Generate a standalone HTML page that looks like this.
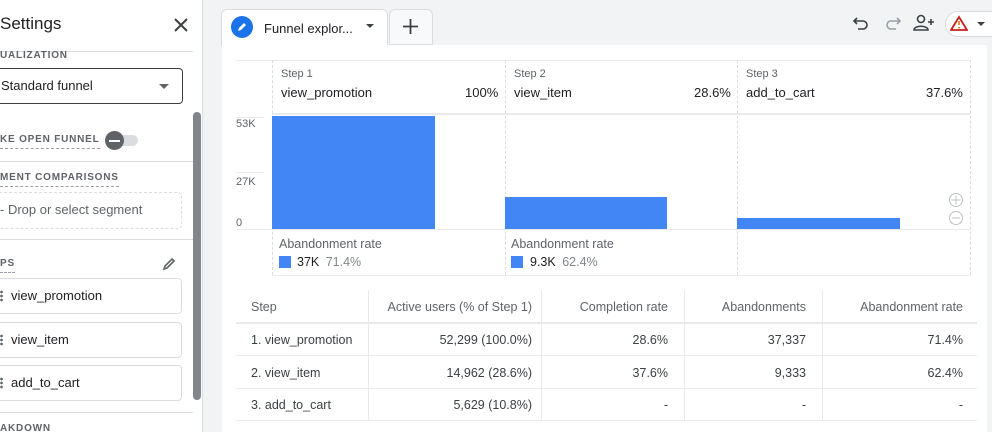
<!DOCTYPE html>
<html><head><style>
*{box-sizing:border-box;margin:0;padding:0}
html,body{width:992px;height:432px;overflow:hidden}
body{background:#f1f3f4;font-family:"Liberation Sans",Arial,sans-serif;color:#202124;position:relative}
.a{position:absolute}
.lab{font-size:10px;letter-spacing:.8px;color:#5f6368;font-weight:bold;border-bottom:1px dashed #9aa0a6}
.stepbox{position:absolute;left:-10px;width:192px;height:36px;border:1px solid #dadce0;border-radius:4px;font-size:13px;line-height:34px;padding-left:20px;background:#fff}
.dots{position:absolute;left:9px;top:11px;width:3px;height:12px;background:radial-gradient(circle,#5f6368 1.2px,transparent 1.5px) 0 0/3px 4px}
.vl{position:absolute;top:60px;height:215px;border-left:1px dashed #dadce0}
.sm{font-size:11px;color:#5f6368}
.t{font-size:13px}
.th{position:absolute;font-size:12.5px;color:#5f6368}
.td{position:absolute;font-size:12.5px;color:#3c4043}
.hl{position:absolute;left:236px;width:741px;border-top:1px solid #e8eaed}
.cl{position:absolute;top:290px;height:130px;border-left:1px solid #e8eaed}
</style></head><body>
<div class="a" style="left:0;top:0;width:203px;height:432px;background:#fff;border-right:1px solid #dadce0"></div>
<div class="a" style="left:0;top:14px;font-size:17px;color:#202124">Settings</div>
<svg class="a" style="left:173px;top:17px" width="16" height="16" viewBox="0 0 16 16"><path d="M2 2L14 14M14 2L2 14" stroke="#3c4043" stroke-width="2"/></svg>
<div class="a" style="left:0;top:51px;width:193px;border-top:1px solid #dadce0"></div>
<div class="a" style="left:0;top:50px;font-size:10px;letter-spacing:.8px;color:#5f6368;font-weight:bold">UALIZATION</div>
<div class="a" style="left:-10px;top:68px;width:193px;height:36px;border:1px solid #3c4043;border-radius:4px;font-size:13px;line-height:34px;padding-left:10px">Standard funnel</div>
<div class="a" style="left:159px;top:84px;border:5px solid transparent;border-top-color:#5f6368"></div>
<div class="a" style="left:193px;top:112px;width:8px;height:288px;background:#80868b;border-radius:4px"></div>
<div class="a lab" style="left:0;top:134px;padding-bottom:3px">KE OPEN FUNNEL</div>
<div class="a" style="left:110px;top:135px;width:28px;height:11px;background:#dadce0;border-radius:6px"></div>
<div class="a" style="left:105px;top:131px;width:19px;height:19px;background:#5f6368;border-radius:50%"></div>
<div class="a" style="left:109px;top:140px;width:11px;height:2px;background:#fff"></div>
<div class="a" style="left:0;top:161px;width:193px;border-top:1px solid #dadce0"></div>
<div class="a lab" style="left:0;top:172px;padding-bottom:3px">MENT COMPARISONS</div>
<div class="a" style="left:-10px;top:192px;width:192px;height:37px;border:1px dashed #dadce0;border-radius:4px"></div>
<div class="a" style="left:0;top:202px;font-size:13px;color:#5f6368">- Drop or select segment</div>
<div class="a" style="left:0;top:239px;width:193px;border-top:1px solid #dadce0"></div>
<div class="a lab" style="left:0;top:258px;padding-bottom:3px">PS</div>
<svg class="a" style="left:162px;top:257px" width="14" height="14" viewBox="0 0 14 14"><path d="M2 12L3 9L10 2L12 4L5 11Z" fill="none" stroke="#5f6368" stroke-width="1.6"/></svg>
<div class="stepbox" style="top:278px"><span class="dots"></span>view_promotion</div>
<div class="stepbox" style="top:322px"><span class="dots"></span>view_item</div>
<div class="stepbox" style="top:365px"><span class="dots"></span>add_to_cart</div>
<div class="a" style="left:0;top:412px;width:193px;border-top:1px solid #dadce0"></div>
<div class="a" style="left:0;top:423px;font-size:10px;letter-spacing:.8px;color:#5f6368;font-weight:bold">AKDOWN</div>

<div class="a" style="left:221px;top:9px;width:167px;height:37px;background:#fff;border:1px solid #dadce0;border-bottom:none;border-radius:6px 6px 0 0"></div>
<div class="a" style="left:231px;top:16px;width:22px;height:22px;border-radius:50%;background:#1a73e8"></div>
<svg class="a" style="left:236px;top:21px" width="12" height="12" viewBox="0 0 12 12"><path d="M2 10L3 7L8 2L10 4L5 9Z" fill="#fff"/></svg>
<div class="a" style="left:264px;top:21px;font-size:13px">Funnel explor...</div>
<div class="a" style="left:366px;top:24px;border:4.5px solid transparent;border-top-color:#3c4043"></div>
<div class="a" style="left:389px;top:9px;width:44px;height:36px;background:#f8f9fa;border:1px solid #dadce0;border-radius:6px 6px 0 0"></div>
<svg class="a" style="left:402px;top:18px" width="17" height="17" viewBox="0 0 17 17"><path d="M8.5 1V16M1 8.5H16" stroke="#3c4043" stroke-width="1.8"/></svg>
<svg class="a" style="left:852px;top:14px" width="18" height="18" viewBox="0 0 18 18"><path d="M5 4L2 7L5 10M2 7H11A4 4 0 0 1 11 15H6" fill="none" stroke="#3c4043" stroke-width="1.6"/></svg>
<svg class="a" style="left:884px;top:14px" width="18" height="18" viewBox="0 0 18 18"><path d="M13 4L16 7L13 10M16 7H7A4 4 0 0 0 7 15H12" fill="none" stroke="#9aa0a6" stroke-width="1.6"/></svg>
<svg class="a" style="left:913px;top:13px" width="22" height="20" viewBox="0 0 22 20"><circle cx="8" cy="6" r="3.5" fill="none" stroke="#3c4043" stroke-width="1.6"/><path d="M1 17C1 12 15 12 15 17Z" fill="none" stroke="#3c4043" stroke-width="1.6"/><path d="M18 6V12M15 9H21" stroke="#3c4043" stroke-width="1.6"/></svg>
<div class="a" style="left:945px;top:11px;width:60px;height:26px;border:1px solid #dadce0;border-radius:13px;background:#fff"></div>
<svg class="a" style="left:950px;top:15px" width="18" height="17" viewBox="0 0 18 17"><path d="M9 2L17 15H1Z" fill="none" stroke="#c5221f" stroke-width="1.8"/><path d="M9 6V10M9 12V13.5" stroke="#e37400" stroke-width="1.6"/></svg>
<div class="a" style="left:977px;top:22px;border:4px solid transparent;border-top-color:#3c4043"></div>

<div class="a" style="left:222px;top:45px;width:765px;height:387px;background:#fff"></div>
<div class="a" style="left:236px;top:60px;width:734px;border-top:1px solid #e8eaed"></div>
<div class="a" style="left:272px;top:113px;width:698px;border-top:2px solid #e8eaed"></div>
<div class="a" style="left:236px;top:229px;width:734px;border-top:1px solid #e8eaed"></div>
<div class="a" style="left:272px;top:275px;width:698px;border-top:1px solid #e8eaed"></div>
<div class="a" style="left:236px;top:117px;width:28px;border-top:1px solid #e8eaed"></div>
<div class="a" style="left:236px;top:172px;width:28px;border-top:1px solid #e8eaed"></div>
<div class="vl" style="left:272px"></div><div class="vl" style="left:505px"></div><div class="vl" style="left:737px"></div><div class="vl" style="left:970px"></div>
<div class="a sm" style="left:236px;top:118px">53K</div>
<div class="a sm" style="left:236px;top:176px">27K</div>
<div class="a sm" style="left:236px;top:217px">0</div>
<div class="a sm" style="left:281px;top:68px">Step 1</div>
<div class="a t" style="left:281px;top:85px">view_promotion</div>
<div class="a t" style="left:465px;top:85px">100%</div>
<div class="a sm" style="left:514px;top:68px">Step 2</div>
<div class="a t" style="left:514px;top:85px">view_item</div>
<div class="a t" style="left:694px;top:85px">28.6%</div>
<div class="a sm" style="left:746px;top:68px">Step 3</div>
<div class="a t" style="left:746px;top:85px">add_to_cart</div>
<div class="a t" style="left:926px;top:85px">37.6%</div>
<div class="a" style="left:272px;top:116px;width:163px;height:113px;background:#4285f4"></div>
<div class="a" style="left:505px;top:197px;width:162px;height:32px;background:#4285f4"></div>
<div class="a" style="left:737px;top:218px;width:163px;height:11px;background:#4285f4"></div>
<svg class="a" style="left:948px;top:192px" width="16" height="34" viewBox="0 0 16 34"><circle cx="8" cy="8" r="6.5" fill="none" stroke="#bdc1c6"/><path d="M8 4V12M4 8H12M4 26H12" stroke="#bdc1c6"/><circle cx="8" cy="26" r="6.5" fill="none" stroke="#bdc1c6"/></svg>
<div class="a" style="left:279px;top:237px;font-size:12.5px;color:#5f6368">Abandonment rate</div>
<div class="a" style="left:279px;top:256px;width:12px;height:12px;background:#4285f4"></div>
<div class="a" style="left:297px;top:255px;font-size:12.5px">37K <span style="color:#80868b;margin-left:3px">71.4%</span></div>
<div class="a" style="left:511px;top:237px;font-size:12.5px;color:#5f6368">Abandonment rate</div>
<div class="a" style="left:511px;top:256px;width:12px;height:12px;background:#4285f4"></div>
<div class="a" style="left:530px;top:255px;font-size:12.5px">9.3K <span style="color:#80868b;margin-left:3px">62.4%</span></div>

<div class="hl" style="top:322px;border-top:2px solid #e8eaed"></div>
<div class="hl" style="top:355px"></div><div class="hl" style="top:388px"></div><div class="hl" style="top:420px"></div>
<div class="cl" style="left:368px"></div><div class="cl" style="left:541px"></div><div class="cl" style="left:684px"></div><div class="cl" style="left:822px"></div>
<div class="th" style="left:251px;top:300px">Step</div>
<div class="th" style="right:460px;top:300px">Active users (% of Step 1)</div>
<div class="th" style="right:324px;top:300px">Completion rate</div>
<div class="th" style="right:186px;top:300px">Abandonments</div>
<div class="th" style="right:29px;top:300px">Abandonment rate</div>
<div class="td" style="left:251px;top:333px">1. view_promotion</div>
<div class="td" style="right:460px;top:333px">52,299 (100.0%)</div>
<div class="td" style="right:324px;top:333px">28.6%</div>
<div class="td" style="right:186px;top:333px">37,337</div>
<div class="td" style="right:29px;top:333px">71.4%</div>
<div class="td" style="left:251px;top:366px">2. view_item</div>
<div class="td" style="right:460px;top:366px">14,962 (28.6%)</div>
<div class="td" style="right:324px;top:366px">37.6%</div>
<div class="td" style="right:186px;top:366px">9,333</div>
<div class="td" style="right:29px;top:366px">62.4%</div>
<div class="td" style="left:251px;top:398px">3. add_to_cart</div>
<div class="td" style="right:460px;top:398px">5,629 (10.8%)</div>
<div class="td" style="right:324px;top:398px">-</div>
<div class="td" style="right:186px;top:398px">-</div>
<div class="td" style="right:29px;top:398px">-</div>
</body></html>
